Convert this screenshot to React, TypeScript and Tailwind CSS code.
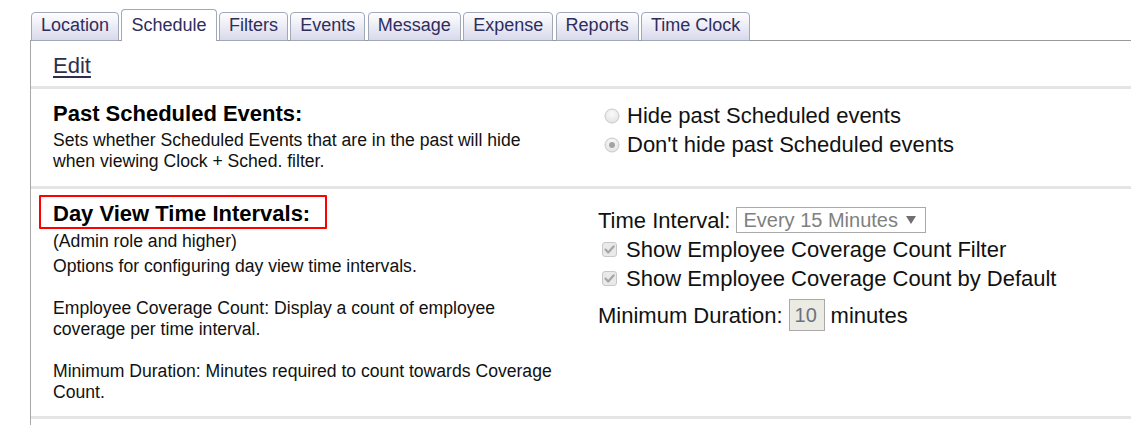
import React from "react";

const tabs = ["Location", "Schedule", "Filters", "Events", "Message", "Expense", "Reports", "Time Clock"];

function Radio({ checked }: { checked?: boolean }) {
  return (
    <svg width="16" height="16" viewBox="0 0 16 16" className="shrink-0">
      <defs>
        <radialGradient id={checked ? "rg1" : "rg2"} cx="50%" cy="35%" r="65%">
          <stop offset="0%" stopColor="#fbfbfb" />
          <stop offset="100%" stopColor="#e2e2e2" />
        </radialGradient>
      </defs>
      <circle cx="8" cy="8" r="7" fill={`url(#${checked ? "rg1" : "rg2"})`} stroke="#c9c9c9" strokeWidth="1" />
      {checked && <circle cx="8" cy="8" r="3" fill="#a3a3a3" />}
    </svg>
  );
}

function Check() {
  return (
    <svg width="15" height="15" viewBox="0 0 15 15" className="shrink-0">
      <rect x="0.5" y="0.5" width="14" height="14" rx="2.5" fill="#e9e9e9" stroke="#c8c8c8" />
      <path d="M3.5 7.6 L6.2 10.4 L11.6 4.4" fill="none" stroke="#a5a5a5" strokeWidth="2.2" strokeLinecap="round" strokeLinejoin="round" />
    </svg>
  );
}

export default function App() {
  return (
    <div className="w-[1131px] h-[425px] overflow-hidden bg-white text-black" style={{ fontFamily: '"Liberation Sans", Arial, sans-serif' }}>
      <div className="pl-[30px] pt-[9px]">
        <div className="relative z-10 flex items-end gap-[2.4px] pl-px mb-[-1px]">
          {tabs.map((t) =>
            t === "Schedule" ? (
              <div
                key={t}
                className="h-[32px] flex items-end px-[9px] pb-[5px] border border-b-0 border-[#9fa9b8] rounded-t-[4px] bg-white text-[18px] leading-[21px] text-[#2e2e5c]"
              >
                {t}
              </div>
            ) : (
              <div
                key={t}
                className="h-[29px] flex items-end px-[9px] pb-[4px] border border-[#9fa9b8] rounded-t-[4px] bg-gradient-to-b from-[#fefeff] to-[#d9d9ec] text-[18px] leading-[21px] text-[#2e2e5c]"
              >
                {t}
              </div>
            )
          )}
        </div>
        <div className="border-t border-l border-t-[#999999] border-l-[#a8a8a8] h-[400px]">
          <div className="pl-[22px] pt-[12px] pb-[6px]">
            <span className="text-[22px] leading-[26px] underline underline-offset-[3px] text-[#2f2f4c]">Edit</span>
          </div>
          <div className="h-[3px] bg-[#e5e5e5]" />

          <div className="flex">
            <div className="w-[567px] shrink-0 pl-[22px] pt-[12px] pb-[14px]">
              <div className="text-[22px] leading-[25px] font-bold">Past Scheduled Events:</div>
              <div className="mt-[4px] text-[17.6px] leading-[21px] text-[#111]">
                Sets whether Scheduled Events that are in the past will hide
                <br />
                when viewing Clock + Sched. filter.
              </div>
            </div>
            <div className="pt-[14px] text-[22px] leading-[25px] text-[#111]">
              <div className="flex items-center gap-[7px] pl-[6px]">
                <Radio />
                <span>Hide past Scheduled events</span>
              </div>
              <div className="flex items-center gap-[7px] pl-[6px] mt-[4px]">
                <Radio checked />
                <span>Don't hide past Scheduled events</span>
              </div>
            </div>
          </div>
          <div className="h-[3px] bg-[#e5e5e5]" />

          <div className="flex">
            <div className="w-[567px] shrink-0 pl-[22px] pt-[12px] pb-[13px]">
              <div className="relative inline-block text-[22px] leading-[25px] font-bold">
                Day View Time Intervals:
                <span className="absolute left-[-14px] right-[-17px] top-[-6px] bottom-[-3px] border-2 border-[#f00] rounded-[1px]" />
              </div>
              <div className="mt-[3px] text-[17.6px] leading-[21px] text-[#111]">(Admin role and higher)</div>
              <div className="mt-[4px] text-[17.6px] leading-[21px] text-[#111]">
                Options for configuring day view time intervals.
                <br />
                <br />
                Employee Coverage Count: Display a count of employee
                <br />
                coverage per time interval.
                <br />
                <br />
                Minimum Duration: Minutes required to count towards Coverage
                <br />
                Count.
              </div>
            </div>
            <div className="pt-[18px] text-[22px] leading-[25px] text-[#111]">
              <div className="flex items-center h-[26px]">
                <span>Time Interval:</span>
                <div className="ml-[6px] h-[26px] w-[190px] border border-[#a9a9a9] flex items-center pl-[6px] pr-[9px] text-[20px] text-[#808080]">
                  <span className="flex-1">Every 15 Minutes</span>
                  <svg width="10" height="8" viewBox="0 0 10 8">
                    <path d="M0 0 L10 0 L5 8 Z" fill="#6f6f6f" />
                  </svg>
                </div>
              </div>
              <div className="flex items-center h-[28px] mt-[2px] pl-[4px] gap-[9px]">
                <Check />
                <span>Show Employee Coverage Count Filter</span>
              </div>
              <div className="flex items-center h-[28px] mt-[1px] pl-[4px] gap-[9px]">
                <Check />
                <span>Show Employee Coverage Count by Default</span>
              </div>
              <div className="flex items-center h-[32px] mt-[7px]">
                <span>Minimum Duration:</span>
                <div className="ml-[6px] h-[32px] w-[36px] border border-[#a9a9a9] bg-[#ebebe4] flex items-center pl-[5px] text-[20px] text-[#6a7280]">
                  10
                </div>
                <span className="ml-[6px]">minutes</span>
              </div>
            </div>
          </div>
          <div className="h-[3px] bg-[#e5e5e5]" />
        </div>
      </div>
    </div>
  );
}
